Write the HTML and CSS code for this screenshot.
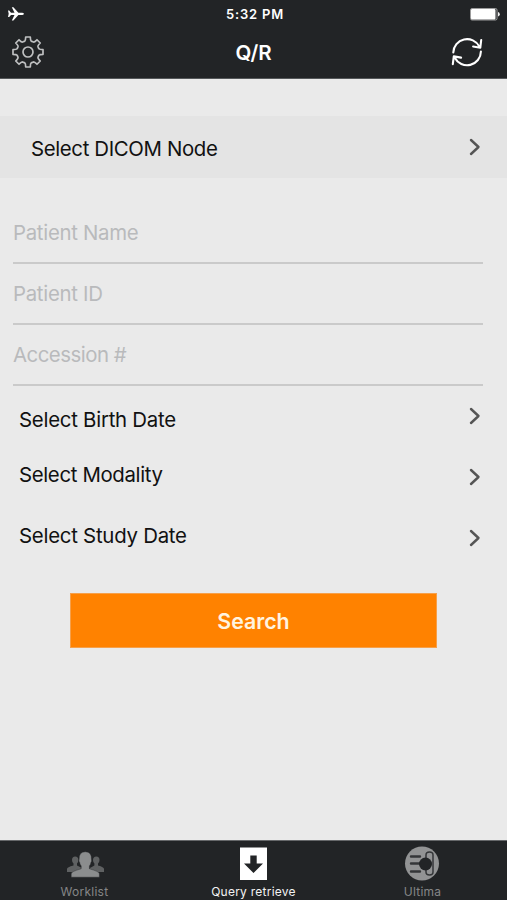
FILE: index.html
```html
<!DOCTYPE html>
<html lang="en">
<head>
<meta charset="utf-8">
<title>Q/R</title>
<link rel="stylesheet" href="styles.css">
</head>
<body>
<header class="header">
  <div class="status">
    <svg class="plane" width="16" height="14" viewBox="0 0 16 14"><path fill="#fff" d="M0 3.500h1.200l1.800 2.200h3.500L3.800.2h1.600l5 5.500h4q1.600.3 1.600 1.100t-1.600 1.100h-4l-5 5.700H3.800l2.700-5.700H3L1.200 10H0l.7-3.200z"/></svg>
    <span class="time">5:32 PM</span>
    <svg class="battery" width="30" height="13" viewBox="0 0 30 13"><rect x=".5" y=".5" width="26.500" height="11.500" rx="1.500" fill="none" stroke="#bbb" stroke-width=".8"/><rect x="1" y="1" width="24.500" height="10.500" rx="1" fill="#fff"/><path d="M28 4q1.800.4 1.800 2.300T28 8.600z" fill="#eee"/></svg>
  </div>
  <div class="nav">
    <svg class="gear" width="34" height="34" viewBox="-17 -17 34 34" fill="none" stroke="#bfc0c1" stroke-width="1.700" stroke-linejoin="round"><path d="M-3.200-10.900Q-2.400-11.500-2.300-15H2.300Q2.400-11.500 3.200-10.900L5.440-9.970Q6.300-9.700 8.980-12.230L12.230-8.980Q9.700-6.300 9.970-5.440L10.900-3.200Q11.500-2.400 15-2.300V2.300Q11.500 2.400 10.900 3.200L9.970 5.440Q9.700 6.300 12.230 8.980L8.980 12.230Q6.300 9.700 5.440 9.970L3.200 10.900Q2.400 11.500 2.300 15H-2.300Q-2.400 11.500-3.200 10.900L-5.440 9.970Q-6.300 9.700-8.980 12.230L-12.230 8.980Q-9.700 6.300-9.970 5.440L-10.900 3.200Q-11.500 2.400-15 2.300V-2.300Q-11.500-2.400-10.900-3.200L-9.970-5.440Q-9.700-6.300-12.230-8.980L-8.980-12.230Q-6.300-9.700-5.440-9.970Z"/><circle r="5"/></svg>
    <h1 class="title">Q/R</h1>
    <svg class="refresh" width="34" height="34" viewBox="0 0 34 34" fill="none" stroke="#fff" stroke-width="2.100" stroke-linecap="round" stroke-linejoin="round"><path d="M3.300 17.500A13.800 13.800 0 0 1 29.300 11.500M31.200 5l-.9 7.700-7.200-1.200M30.900 16.500A13.800 13.800 0 0 1 4.800 22.700M2.800 29.200l1-7.800 7.300 1.200"/></svg>
  </div>
</header>
<main class="content">
  <div class="row node"><span class="label">Select DICOM Node</span><svg class="chevron" width="12" height="18" viewBox="0 0 12 18"><path d="M2 2l7.500 7L2 16"/></svg></div>
  <form class="fields">
    <div class="field">Patient Name</div>
    <div class="field">Patient ID</div>
    <div class="field accession">Accession #</div>
  </form>
  <div class="row birth"><span class="label">Select Birth Date</span><svg class="chevron" width="12" height="18" viewBox="0 0 12 18"><path d="M2 2l7.500 7L2 16"/></svg></div>
  <div class="row pick"><span class="label modality">Select Modality</span><svg class="chevron" width="12" height="18" viewBox="0 0 12 18"><path d="M2 2l7.500 7L2 16"/></svg></div>
  <div class="row pick"><span class="label">Select Study Date</span><svg class="chevron" width="12" height="18" viewBox="0 0 12 18"><path d="M2 2l7.500 7L2 16"/></svg></div>
  <button class="search" type="button">Search</button>
</main>
<nav class="tabs">
  <div class="tab">
    <svg width="40" height="36" viewBox="0 0 40 36"><path fill="#5f6162" d="M2 26v-3q0-2 6.500-3.500v-2q-1.500-1.300-1.500-3.500 0-3.500 3.200-3.500t3.200 3.500q0 2.200-1.400 3.500v2L17 22v4zM39 26v-3q0-2-6-3.500v-2q1.500-1.300 1.500-3.500 0-3.500-3.200-3.500T28 14q0 2.200 1.400 3.500v2L25 22v4z"/><path fill="#8b8d8e" stroke="#222426" stroke-width=".4" d="M6.200 31.200v-3.400q0-2.300 10-5v-2.900q-1.400-1.500-1.600-3.600-1-1-.5-2.600Q13.700 5.800 20.300 5.800t6.200 7.900q.5 1.600-.5 2.600-.2 2.100-1.600 3.600v2.900q10 2.700 10 5v3.400z"/></svg>
    <span class="tab-label">Worklist</span>
  </div>
  <div class="tab active">
    <svg width="28" height="36" viewBox="0 0 28 36"><path fill="#fff" d="M0 1.500h27V34H0z"/><path fill="#222426" d="M10.300 9.500h6.400v8H23L13.500 27 4 17.500h6.300z"/></svg>
    <span class="tab-label">Query retrieve</span>
  </div>
  <div class="tab">
    <svg class="ultima" width="36" height="36" viewBox="0 0 36 36"><circle cx="18" cy="17.500" r="17" fill="#929394"/><g fill="none" stroke="#343638"><path stroke-width="2.400" stroke-linecap="round" d="M7 10.500h9M7 17.500h8M7 25.500h9"/><path stroke-width="1.500" d="M22 12V9q0-3 3.500-3T29 9v17q0 3-3.500 3T22 26v-4"/></g><circle cx="21.500" cy="18" r="6.500" fill="#222426"/></svg>
    <span class="tab-label">Ultima</span>
  </div>
</nav>
</body>
</html>
```
FILE: styles.css
```css
* { box-sizing: border-box; }
body {
  margin: 0;
  height: 900px;
  display: flex;
  flex-direction: column;
  background: #eaeaea;
  color: #111;
  font-family: Inter, "Liberation Sans", sans-serif;
  font-size: 20px;
  overflow: hidden;
}
svg { display: block; flex: none; }
.header {
  height: 79px;
  background: #222426;
  color: #fff;
  border-bottom: 1px solid #55585a;
}
.status, .nav {
  display: grid;
  grid-template-columns: 1fr auto 1fr;
  align-items: center;
}
.status { height: 27px; padding: 0 7px 0 8px; }
.plane { margin-top: -1px; }
.time { font-size: 13px; font-weight: 600; letter-spacing: 0.8px; line-height: 27px; padding: 1px 0 0 2px; }
.battery, .refresh { justify-self: end; }
.nav { height: 50px; padding: 0 23px 0 11px; }
.title { margin: 0; padding: 2px 0 0 12px; font-size: 20.5px; font-weight: 600; letter-spacing: -0.1px; line-height: 24px; }
.content { flex: 1; padding-top: 37px; }
.row {
  display: flex;
  justify-content: space-between;
  padding: 0 26px 0 19px;
  height: 61px;
  align-items: center;
}
.label { font-size: 20.4px; letter-spacing: -0.25px; line-height: 24px; }
.node { height: 62px; padding-left: 31px; background: #e4e4e4; }
.node .label { padding-top: 3px; letter-spacing: -0.36px; }
.modality { letter-spacing: -0.35px; }
.birth .label { padding-top: 7px; }
.pick .label { padding-bottom: 5px; }
.chevron { fill: none; stroke: #555; stroke-width: 2.4; stroke-linecap: round; stroke-linejoin: round; }
.birth .chevron, .pick .chevron { margin-bottom: 2px; }
.fields { margin: 25px 24px 0 13px; }
.field {
  height: 61px;
  padding-top: 18px;
  line-height: 24px;
  font-size: 20.4px;
  letter-spacing: -0.3px;
  color: #b9babc;
  border-bottom: 2px solid #cacaca;
}
.accession { letter-spacing: -0.5px; }
.search {
  display: block;
  width: 367px;
  height: 55px;
  margin: 24px 0 0 70px;
  padding: 1px 0 0;
  border: 1px solid #f6a04a;
  background: #ff8200;
  color: #fff4e0;
  font: 600 21.3px/52px Inter, "Liberation Sans", sans-serif;
}
.tabs {
  height: 60px;
  display: grid;
  grid-template-columns: repeat(3, 1fr);
  background: #222426;
  border-top: 1px solid #66686a;
}
.tab {
  display: flex;
  flex-direction: column;
  align-items: center;
  padding-top: 5px;
  color: #858687;
  font-size: 12px;
  letter-spacing: 0.25px;
}
.tab-label { line-height: 20px; }
.ultima { margin-right: 1px; }
.active { color: #f2f2f2; }
```
